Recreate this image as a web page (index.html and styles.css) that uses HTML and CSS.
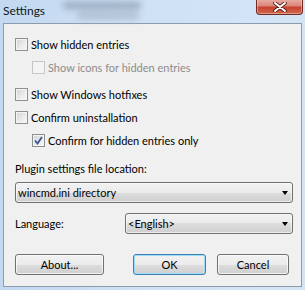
FILE: index.html
```html
<!DOCTYPE html>
<html lang="en">
  <head>
    <meta charset="UTF-8" />
    <title>Settings</title>
    <link rel="stylesheet" href="styles.css">
  </head>
  <body>
    <div class="window">
      <div class="titlebar">
        <span class="title">Settings</span>
        <div class="glass-blur">
          <span class="blob blob-top"></span>
          <span class="blob blob-bottom"></span>
        </div>
        <button class="close-btn">
          <svg width="14" height="10" viewBox="0 0 14 10">
            <path d="M2 1 L12 9 M12 1 L2 9" stroke="#4a1a14" stroke-width="3.6" stroke-linecap="round" />
            <path d="M2 1 L12 9 M12 1 L2 9" stroke="#ffffff" stroke-width="2" stroke-linecap="round" />
          </svg>
        </button>
      </div>

      <div class="client">
        <label class="check-row first">
          <span class="box"></span>
          <span>Show hidden entries</span>
        </label>
        <label class="check-row sub disabled">
          <span class="box"></span>
          <span>Show icons for hidden entries</span>
        </label>
        <label class="check-row group">
          <span class="box"></span>
          <span>Show Windows hotfixes</span>
        </label>
        <label class="check-row">
          <span class="box"></span>
          <span>Confirm uninstallation</span>
        </label>
        <label class="check-row sub">
          <span class="box checked">
            <svg width="9" height="9" viewBox="0 0 9 9">
              <path d="M1 4.5 L3.5 7.5 L8 1" fill="none" stroke="#3d5494" stroke-width="1.8" />
            </svg>
          </span>
          <span>Confirm for hidden entries only</span>
        </label>

        <div class="field-label">Plugin settings file location:</div>
        <div class="combo wide">
          <span>wincmd.ini directory</span>
          <span class="arrow"></span>
        </div>

        <div class="lang-row">
          <span>Language:</span>
          <div class="combo narrow">
            <span>&lt;English&gt;</span>
            <span class="arrow"></span>
          </div>
        </div>

        <div class="button-row">
          <button class="btn about">About...</button>
          <button class="btn ok">OK</button>
          <button class="btn cancel">Cancel</button>
        </div>
      </div>
    </div>
  </body>
</html>
```

FILE: styles.css
```css
body {
  margin: 0;
  font-family: Lato, "Open Sans", sans-serif;
  font-size: 11px;
  color: #000;
}

.window {
  width: 305px;
  height: 290px;
  box-sizing: border-box;
  padding: 0 3px 3px;
  display: flex;
  flex-direction: column;
  background: linear-gradient(90deg, #c3d9f0 0%, #cfe2f5 50%, #d3e4f5 100%);
}

.titlebar {
  height: 23px;
  display: flex;
  align-items: flex-start;
}

.title {
  margin-top: 3px;
  line-height: 16px;
  font-size: 12px;
  color: #101820;
}

.glass-blur {
  margin-left: 12px;
  width: 86px;
  height: 22px;
  display: flex;
  flex-direction: column;
  gap: 3px;
  padding-top: 2px;
  box-sizing: border-box;
  filter: blur(3px);
}

.blob {
  display: block;
  height: 7px;
  background: #9aabbf;
  border-radius: 3px;
}

.blob-top {
  width: 78px;
  margin-left: 6px;
}

.blob-bottom {
  width: 62px;
  margin-left: 20px;
  background: #afbdce;
}

.close-btn {
  margin-left: auto;
  margin-right: -1px;
  width: 47px;
  height: 16px;
  margin-top: -1px;
  padding: 0;
  border: 1px solid #6d2b22;
  border-top: none;
  border-radius: 0 0 4px 4px;
  background: linear-gradient(#eab0a6 0%, #d9867b 45%, #c5432f 55%, #d0674f 100%);
  box-shadow: inset 0 0 0 1px rgba(255, 220, 210, 0.45);
  display: flex;
  align-items: center;
  justify-content: center;
}

.client {
  flex: 1;
  border: 1px solid #8d9cad;
  background-color: #f0f0f0;
  padding: 0 8px 0 11px;
  display: flex;
  flex-direction: column;
}

.check-row {
  display: flex;
  align-items: center;
  height: 13px;
  gap: 3px;
  margin-top: 10px;
  white-space: nowrap;
}

.check-row.first {
  margin-top: 14px;
}

.check-row.group {
  margin-top: 14px;
}

.check-row.sub {
  margin-left: 17px;
}

.check-row.disabled {
  color: #8d8d8d;
}

.box {
  width: 13px;
  height: 13px;
  flex: none;
  box-sizing: border-box;
  border: 1px solid #8e8f8f;
  background: linear-gradient(135deg, #cfd2d6 0%, #ececec 60%, #f8f8f8 100%);
  box-shadow: inset 0 0 0 1px #f4f4f4;
  display: flex;
  align-items: center;
  justify-content: center;
}

.disabled .box {
  border-color: #c6c6c6;
  background: #f4f4f4;
  box-shadow: none;
}

.field-label {
  margin-top: 14px;
  line-height: 15px;
}

.combo {
  height: 21px;
  box-sizing: border-box;
  border: 1px solid #707070;
  border-radius: 3px;
  background: linear-gradient(#f2f2f2 0%, #ebebeb 50%, #dddddd 50%, #cfcfcf 100%);
  box-shadow: inset 0 0 0 1px rgba(255, 255, 255, 0.6);
  display: flex;
  align-items: center;
  justify-content: space-between;
  padding: 0 4px 0 2px;
}

.combo.wide {
  margin-top: 6px;
}

.combo.narrow {
  width: 168px;
}

.arrow {
  width: 0;
  height: 0;
  border-left: 3.5px solid transparent;
  border-right: 3.5px solid transparent;
  border-top: 4px solid #000;
}

.lang-row {
  margin-top: 10px;
  display: flex;
  align-items: center;
  justify-content: space-between;
}

.button-row {
  margin-top: 20px;
  display: flex;
}

.btn {
  height: 21px;
  padding: 0;
  font-family: Lato, "Open Sans", sans-serif;
  font-size: 11px;
  color: #000;
  border: 1px solid #707070;
  border-radius: 3px;
  background: linear-gradient(#f2f2f2 0%, #ebebeb 50%, #dddddd 50%, #cfcfcf 100%);
  box-shadow: inset 0 0 0 1px rgba(255, 255, 255, 0.7);
}

.btn.about {
  width: 89px;
}

.btn.ok {
  width: 73px;
  margin-left: 29px;
  border-color: #3c7fb1;
  box-shadow: inset 0 0 0 1px #9cdcf8;
}

.btn.cancel {
  width: 72px;
  margin-left: 11px;
}
```
